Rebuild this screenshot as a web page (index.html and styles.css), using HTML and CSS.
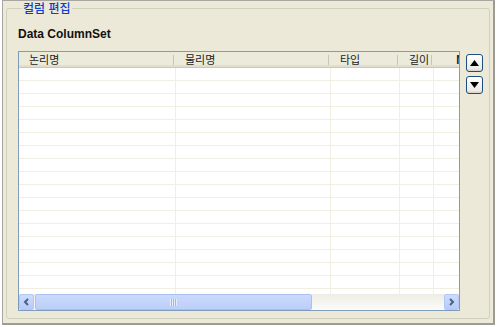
FILE: index.html
```html
<!DOCTYPE html>
<html lang="ko">
<head>
    <meta charset="UTF-8">
    <title>컬럼 편집</title>
    <link rel="stylesheet" href="styles.css">
</head>
<body>

    <div class="panel">
        <fieldset class="group">
            <legend>컬럼 편집</legend>
            <div class="title">Data ColumnSet</div>
            <div class="editor">
                <div class="grid">
                    <div class="grid-view">
                        <table class="cols">
                            <colgroup>
                                <col style="width:156px">
                                <col style="width:155px">
                                <col style="width:69px">
                                <col style="width:34px">
                                <col style="width:200px">
                            </colgroup>
                            <thead>
                                <tr>
                                    <th>논리명</th>
                                    <th>물리명</th>
                                    <th>타입</th>
                                    <th>길이</th>
                                    <th class="next">Null</th>
                                </tr>
                            </thead>
                            <tbody id="rows"></tbody>
                        </table>
                    </div>
                    <div class="hscroll">
                        <div class="sb-btn">
                            <svg width="7" height="8" viewBox="0 0 7 8"><path d="M5 1 L2 4 L5 7" fill="none" stroke="#4d6185" stroke-width="2"/></svg>
                        </div>
                        <div class="sb-track">
                            <div class="sb-thumb"><span class="grip"></span></div>
                        </div>
                        <div class="sb-btn">
                            <svg width="7" height="8" viewBox="0 0 7 8"><path d="M2 1 L5 4 L2 7" fill="none" stroke="#4d6185" stroke-width="2"/></svg>
                        </div>
                    </div>
                </div>
                <div class="moves">
                    <button class="move">
                        <svg width="9" height="6" viewBox="0 0 9 6"><path d="M0 6 L4.5 0 L9 6 Z" fill="#000"/></svg>
                    </button>
                    <button class="move">
                        <svg width="9" height="6" viewBox="0 0 9 6"><path d="M0 0 L9 0 L4.5 6 Z" fill="#000"/></svg>
                    </button>
                </div>
            </div>
        </fieldset>
    </div>

    <script>
        // empty rows for the grid body
        const tbody = document.getElementById('rows');
        for (let i = 0; i < 18; i++) {
            const tr = document.createElement('tr');
            for (let c = 0; c < 5; c++) {
                tr.appendChild(document.createElement('td'));
            }
            tbody.appendChild(tr);
        }
    </script>

</body>
</html>
```

FILE: styles.css
```css
body {
    margin: 0;
    background: #fff;
    font-family: "Noto Sans CJK KR", "DejaVu Sans", sans-serif;
    font-size: 11px;
}
.panel {
    margin: 0 2px;
    height: 325px;
    box-sizing: border-box;
    background: #ece9d8;
    border: 1px solid #a7a6a0;
    border-right: 2px solid #9c9b95;
    border-bottom: 2px solid #9c9b95;
    padding: 0 3px 4px 3px;
    display: flex;
}
.group {
    flex: 1;
    margin: 0;
    padding: 0 0 0 11px;
    border: 1px solid #d0d0bf;
    border-radius: 3px;
    min-width: 0;
}
.group legend {
    margin-left: 4px;
    padding: 0 1px;
    font-size: 12px;
    line-height: 14px;
    color: #0b3fd4;
    font-weight: 500;
}
.title {
    margin-top: 12px;
    height: 14px;
    line-height: 14px;
    font-family: "Liberation Sans", Arial, sans-serif;
    font-weight: bold;
    font-size: 12px;
    color: #111;
}
.editor {
    display: flex;
    gap: 6px;
    margin-top: 10px;
}
.grid {
    width: 442px;
    height: 260px;
    box-sizing: border-box;
    border: 1px solid #7f9db9;
    background: #fff;
    display: flex;
    flex-direction: column;
}
.grid-view {
    flex: 1;
    overflow: hidden;
}
.cols {
    border-collapse: collapse;
    table-layout: fixed;
    width: 614px;
}
.cols th {
    height: 15px;
    padding: 0 0 0 10px;
    text-align: left;
    font-weight: normal;
    font-size: 11px;
    line-height: 15px;
    color: #222;
    background: #ebeadb;
    border-bottom: 1px solid #cbc7b8;
    box-shadow: inset 0 -2px #e2decd;
    white-space: nowrap;
    background-image: linear-gradient(#c7c5b2, #c7c5b2);
    background-repeat: no-repeat;
    background-size: 1px 10px;
    background-position: right 1px top 3px;
}
.cols th.next {
    padding-left: 23px;
    font-weight: bold;
}
.cols td {
    height: 12px;
    padding: 0;
    border-bottom: 1px solid #f1efe2;
    border-right: 1px solid #f1efe2;
}
.hscroll {
    height: 16px;
    display: flex;
    background: #f4f3ee;
}
.sb-btn {
    width: 15px;
    height: 16px;
    box-sizing: border-box;
    border: 1px solid #b4c8f6;
    border-radius: 2px;
    background: linear-gradient(#cddcfd, #b7cbf8);
    display: flex;
    justify-content: center;
    align-items: center;
}
.sb-track {
    flex: 1;
    padding: 0 1px;
    background: linear-gradient(#eeede5, #fbfbf9);
}
.sb-thumb {
    width: 277px;
    height: 16px;
    box-sizing: border-box;
    border: 1px solid #a9c0f5;
    border-radius: 2px;
    background: linear-gradient(#cbdafd, #bccff9);
    display: flex;
    justify-content: center;
    align-items: center;
}
.grip {
    width: 7px;
    height: 7px;
    background: repeating-linear-gradient(90deg, #e6eefc 0 1px, #9db6ee 1px 2px);
}
.moves {
    display: flex;
    flex-direction: column;
    gap: 4px;
    padding-top: 3px;
}
.move {
    width: 17px;
    height: 18px;
    padding: 0;
    border: 1px solid #1c4f7e;
    border-radius: 3px;
    background: linear-gradient(#ffffff, #ecebe6 85%, #d6d0c5);
    display: flex;
    justify-content: center;
    align-items: center;
}
```
